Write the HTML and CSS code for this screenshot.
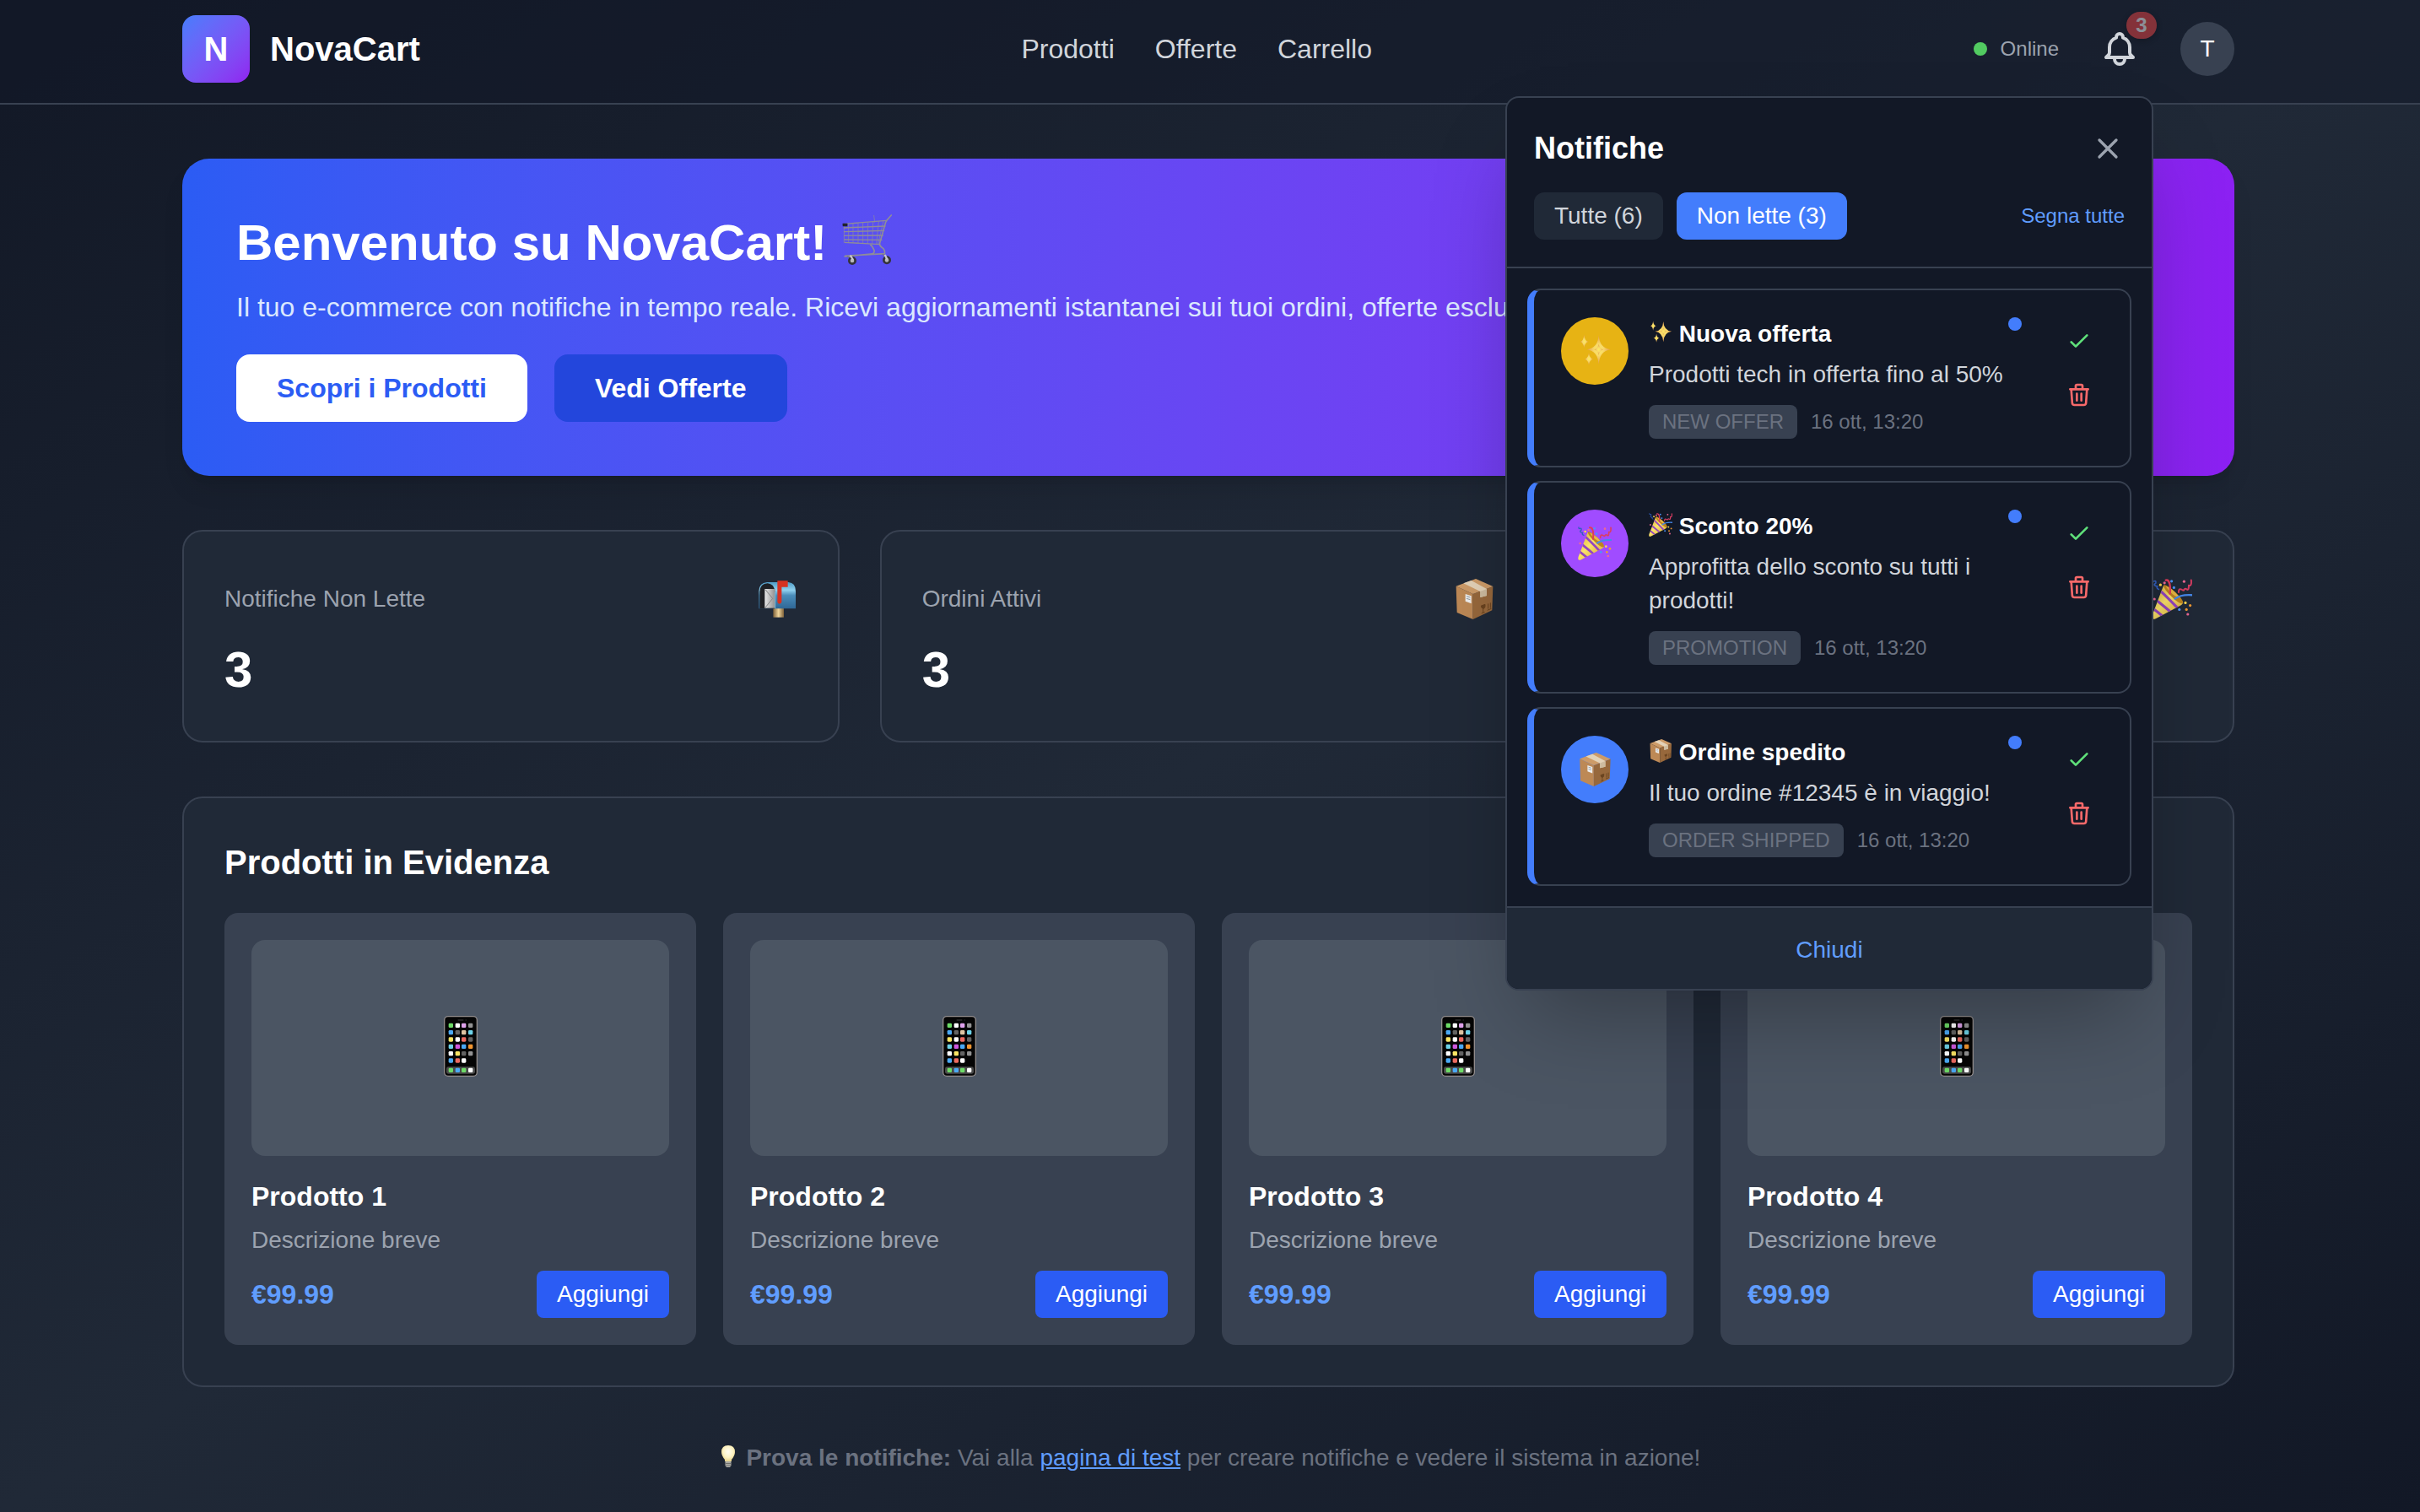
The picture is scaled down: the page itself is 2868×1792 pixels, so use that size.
FILE: index.html
```html
<!DOCTYPE html>
<html lang="it">
<head>
<meta charset="utf-8">
<meta name="viewport" content="width=device-width, initial-scale=1">
<title>NovaCart</title>
<link rel="stylesheet" href="styles.css">
</head>
<body>
<svg class="sprite" aria-hidden="true">
  <defs>
    <linearGradient id="gold" x1="0" y1="0" x2="1" y2="1"><stop offset="0" stop-color="#c99422"/><stop offset=".45" stop-color="#fbe36c"/><stop offset="1" stop-color="#c48a1e"/></linearGradient>
    <linearGradient id="mail" x1="0" y1="0" x2="0" y2="1"><stop offset="0" stop-color="#4f9cc6"/><stop offset=".3" stop-color="#8fd0ee"/><stop offset=".5" stop-color="#4a8dba"/><stop offset="1" stop-color="#2f6796"/></linearGradient>
    <linearGradient id="letter" x1="0" y1="0" x2="1" y2="0"><stop offset="0" stop-color="#e8e8e8"/><stop offset="1" stop-color="#8f8f8f"/></linearGradient>
    <linearGradient id="post" x1="0" y1="0" x2="1" y2="0"><stop offset="0" stop-color="#7d6039"/><stop offset=".5" stop-color="#f2d79c"/><stop offset="1" stop-color="#7d6039"/></linearGradient>
    <radialGradient id="star"><stop offset="0" stop-color="#fbec62"/><stop offset=".4" stop-color="#f8d868"/><stop offset="1" stop-color="#e39a52"/></radialGradient>
    <radialGradient id="glow" cx=".5" cy=".4" r=".6"><stop offset="0" stop-color="#fffef4"/><stop offset=".6" stop-color="#fdf3c4"/><stop offset="1" stop-color="#e6d28a"/></radialGradient>
    <clipPath id="cone"><path d="M2 118Q-1 112 4 102L35 20Q44 20 68 42Q92 62 93 72Q90 78 80 82L12 118Q5 121 2 118Z"/></clipPath>
  </defs>
  <symbol id="cart" viewBox="0 0 180 180">
    <g fill="none" stroke="#8f8d98" stroke-linecap="round">
      <path stroke-width="5" d="M178 3L163 20L158 28L136 106M104 109Q110 112 117 128Q120 140 104 141L12 150M137 108Q138 114 150 122Q156 130 154 140L14 148"/>
      <path stroke-width="4" d="M14 34L160 22M10 48L156 42M11 62L152 58M11 76L148 75M12 90L144 91M13 100L137 107"/>
      <path stroke-width="2" d="M10 40V100M26 35V100M42 34V101M60 32V102M77 31V103M95 30L94 104M113 28L110 105M133 26L125 106M116 4L119 28M150 24L131 104"/>
      <path stroke-width="4" stroke="#77757f" d="M22 150L36 158M148 142L160 156"/>
    </g>
    <rect x="5" y="32" width="17" height="11" rx="2" fill="#20222c"/>
    <g fill="#b9b8bc" stroke="#35343a" stroke-width="8"><circle cx="39" cy="165" r="11"/><circle cx="162" cy="163" r="11"/></g>
    <path d="M32 146L42 162M155 144L163 160" stroke="#c9c8ce" stroke-width="7"/>
  </symbol>
  <symbol id="mailbox" viewBox="0 0 144 144">
    <rect x="58" y="100" width="38" height="37" fill="url(#post)"/>
    <path d="M36 12H112Q138 14 138 44V106H7V44Q8 14 36 12Z" fill="url(#mail)"/>
    <path d="M10 106V46Q12 16 38 16Q62 18 64 46V106Z" fill="#1f2125"/>
    <rect x="28" y="36" width="37" height="68" fill="url(#letter)"/>
    <path d="M30 38L56 70L30 102" fill="none" stroke="#858585" stroke-width="3"/>
    <path d="M65 46V106" stroke="#7db9d8" stroke-width="3"/>
    <path d="M73 7H110V29H88V82Q87 89 80 89Q74 89 73 82Z" fill="#d63222"/>
  </symbol>
  <symbol id="package" viewBox="0 0 144 144">
    <path d="M8 26L68 54V144L11 120Z" fill="#bd8956"/>
    <path d="M68 54L139 27L136 112L68 144Z" fill="#97683c"/>
    <path d="M8 26L78 0L139 27L68 54Z" fill="#cd9b68"/>
    <path d="M34 16L62 6L117 36V60L94 66V45Z" fill="#e3d2b8"/>
    <path d="M94 45L117 36V60L94 66Z" fill="#cdbb9f"/>
    <path d="M41 54L62 61V88L41 80Z" fill="#eeeeee"/>
    <path d="M45 62L58 66M45 70L58 74" stroke="#8d99a3" stroke-width="3"/>
    <path d="M97 96L111 91Q112 105 105 106Q98 106 97 96ZM104 106V121M98 123L110 118M122 88V107M130 85V104M119 112L133 106" fill="#69431f" stroke="#69431f" stroke-width="3"/>
  </symbol>
  <symbol id="party" viewBox="0 0 120 120">
    <g clip-path="url(#cone)">
      <rect width="120" height="120" fill="url(#gold)"/>
      <path d="M24 34Q48 56 78 88M12 62Q30 76 56 98M4 88Q18 98 34 112" fill="none" stroke="#9345bf" stroke-width="8"/>
    </g>
    <path d="M35 19Q42 14 68 38Q95 62 93 72Q84 78 60 54Q36 32 35 19Z" fill="#bd8420"/>
    <path d="M42 22Q55 26 70 40L84 56Q70 54 58 42Q46 30 42 22Z" fill="#e7b844"/>
    <g fill="none" stroke-linecap="round" stroke-width="6">
      <path d="M42 4Q50 2 53 14Q56 28 54 44" stroke="#df3c5b"/>
      <path d="M69 59Q86 46 118 48" stroke="#4688ea"/>
      <path d="M80 40Q80 28 87 31T94 36Q98 26 104 31T110 20Q119 22 117 4" stroke="#d93e63" stroke-width="5"/>
      <path d="M3 3Q2 9 8 7T12 13Q5 17 10 20T18 21Q12 28 21 31" stroke="#315fc0" stroke-width="4"/>
    </g>
    <g fill="#ffd84f"><circle cx="26" cy="18" r="4"/><circle cx="100" cy="71" r="4"/></g>
    <g fill="#f09a32"><circle cx="114" cy="79" r="4"/><circle cx="103" cy="91" r="4"/></g>
    <g fill="#4d94fa"><circle cx="59" cy="7" r="4"/><circle cx="66" cy="26" r="4"/><circle cx="82" cy="91" r="4"/></g>
    <g fill="#ec6894"><circle cx="96" cy="8" r="4"/><circle cx="8" cy="60" r="4"/><circle cx="38" cy="12" r="4"/><circle cx="107" cy="105" r="4"/></g>
  </symbol>
  <symbol id="sparkles" viewBox="0 0 120 120">
    <g fill="url(#star)">
      <path d="M74 4Q77 50 116 55Q77 60 74 108Q71 60 32 55Q71 50 74 4Z"/>
      <path d="M74 36Q78 51 90 55Q78 59 74 74Q70 59 58 55Q70 51 74 36Z"/>
      <path d="M22 2Q24 24 38 27Q24 30 22 50Q20 30 8 27Q20 24 22 2Z"/>
      <path d="M39 66Q41 86 54 89Q41 92 39 110Q37 92 24 89Q37 86 39 66Z"/>
    </g>
  </symbol>
  <symbol id="phone" viewBox="0 0 216 216">
    <rect x="50" y="2" width="116" height="212" rx="13" fill="#050505" stroke="#918c8c" stroke-width="4"/>
    <path d="M98 15H118M125 15H128" stroke="#2d2d2d" stroke-width="5"/>
    <rect x="57" y="181" width="102" height="25" rx="7" fill="#4a4a4a"/>
    <g fill="#6ddb67"><rect x="65" y="26" width="16" height="16" rx="4"/><rect x="65" y="185" width="16" height="16" rx="4"/><rect x="111" y="185" width="16" height="16" rx="4"/></g>
    <g fill="#fff"><rect x="89" y="26" width="16" height="16" rx="4"/><rect x="89" y="76" width="16" height="16" rx="4"/><rect x="65" y="126" width="16" height="16" rx="4"/><rect x="111" y="151" width="16" height="16" rx="4"/><rect x="135" y="185" width="16" height="16" rx="4"/></g>
    <g fill="#4ba9f5"><rect x="65" y="51" width="16" height="16" rx="4"/><rect x="111" y="101" width="16" height="16" rx="4"/><rect x="65" y="151" width="16" height="16" rx="4"/><rect x="89" y="185" width="16" height="16" rx="4"/></g>
    <g fill="#636363"><rect x="89" y="51" width="16" height="16" rx="4"/><rect x="135" y="76" width="16" height="16" rx="4"/><rect x="111" y="126" width="16" height="16" rx="4"/></g>
    <g fill="#929292"><rect x="135" y="26" width="16" height="16" rx="4"/><rect x="135" y="126" width="16" height="16" rx="4"/></g>
    <g fill="#6dd3e8"><rect x="135" y="51" width="16" height="16" rx="4"/><rect x="65" y="101" width="16" height="16" rx="4"/></g>
    <g fill="#fae464"><rect x="65" y="76" width="16" height="16" rx="4"/><rect x="89" y="126" width="16" height="16" rx="4"/></g>
    <g fill="#ec6a60"><rect x="111" y="76" width="16" height="16" rx="4"/><rect x="89" y="151" width="16" height="16" rx="4"/></g>
    <rect x="111" y="26" width="16" height="16" rx="4" fill="#dfa2ec"/><rect x="111" y="51" width="16" height="16" rx="4" fill="#dec4a3"/><rect x="89" y="101" width="16" height="16" rx="4" fill="#cf58dd"/><rect x="135" y="101" width="16" height="16" rx="4" fill="#f1952f"/>
  </symbol>
  <symbol id="bulb" viewBox="0 0 28 28">
    <path d="M14 1Q22 1 22 9Q22 13 18 18V20H10V18Q6 13 6 9Q6 1 14 1Z" fill="url(#glow)"/>
    <path d="M10.500 20H17.500V25L16 27H12L10.500 25Z" fill="#a9a9a4"/>
    <path d="M10.500 22.500H17.500M11 25H17" stroke="#70706c"/>
  </symbol>
  <symbol id="check" viewBox="0 0 24 24"><path d="M5 13l4 4L19 7"/></symbol>
  <symbol id="trash" viewBox="0 0 24 24"><path d="M19 7l-.867 12.142A2 2 0 0116.138 21H7.862a2 2 0 01-1.995-1.858L5 7m5 4v6m4-6v6m1-10V4a1 1 0 00-1-1h-4a1 1 0 00-1 1v3M4 7h16"/></symbol>
</svg>

<header class="topbar">
  <div class="container topbar-row">
    <div class="brand"><span class="logo">N</span><span>NovaCart</span></div>
    <nav class="nav"><a href="#prodotti">Prodotti</a><a href="#offerte">Offerte</a><a href="#carrello">Carrello</a></nav>
    <div class="tools">
      <div class="status"><span class="status-dot"></span>Online</div>
      <div class="bell-wrap">
        <button class="bell" type="button" aria-label="Notifiche">
          <svg class="line-icon bell-icon" viewBox="0 0 24 24"><path d="M15 17h5l-1.405-1.405A2.032 2.032 0 0118 14.158V11a6.002 6.002 0 00-4-5.659V5a2 2 0 10-4 0v.341C7.670 6.165 6 8.388 6 11v3.159c0 .538-.214 1.055-.595 1.436L4 17h5m6 0v1a3 3 0 11-6 0v-1m6 0H9"/></svg>
          <span class="badge">3</span>
        </button>
        <section class="panel" aria-label="Notifiche">
          <div class="panel-head">
            <div class="panel-title">
              <h2>Notifiche</h2>
              <button class="close" type="button" aria-label="Chiudi pannello"><svg class="line-icon" viewBox="0 0 24 24"><path d="M6 18L18 6M6 6l12 12"/></svg></button>
            </div>
            <div class="tabs">
              <button class="tab" type="button">Tutte (6)</button>
              <button class="tab tab-active" type="button">Non lette (3)</button>
              <button class="mark-all" type="button">Segna tutte</button>
            </div>
          </div>
          <ul class="list">
            <li class="item">
              <span class="avatar avatar-offer"><svg><use href="#sparkles"/></svg></span>
              <div class="item-body">
                <div class="item-title"><h3><svg class="emoji"><use href="#sparkles"/></svg> Nuova offerta</h3><span class="unread"></span></div>
                <p class="message">Prodotti tech in offerta fino al 50%</p>
                <div class="meta"><span class="tag">NEW OFFER</span><time>16 ott, 13:20</time></div>
              </div>
              <div class="actions">
                <button class="action read" type="button" aria-label="Segna come letta"><svg class="line-icon"><use href="#check"/></svg></button>
                <button class="action delete" type="button" aria-label="Elimina"><svg class="line-icon"><use href="#trash"/></svg></button>
              </div>
            </li>
            <li class="item">
              <span class="avatar avatar-promo"><svg><use href="#party"/></svg></span>
              <div class="item-body">
                <div class="item-title"><h3><svg class="emoji"><use href="#party"/></svg> Sconto 20%</h3><span class="unread"></span></div>
                <p class="message">Approfitta dello sconto su tutti i prodotti!</p>
                <div class="meta"><span class="tag">PROMOTION</span><time>16 ott, 13:20</time></div>
              </div>
              <div class="actions">
                <button class="action read" type="button" aria-label="Segna come letta"><svg class="line-icon"><use href="#check"/></svg></button>
                <button class="action delete" type="button" aria-label="Elimina"><svg class="line-icon"><use href="#trash"/></svg></button>
              </div>
            </li>
            <li class="item">
              <span class="avatar avatar-order"><svg><use href="#package"/></svg></span>
              <div class="item-body">
                <div class="item-title"><h3><svg class="emoji"><use href="#package"/></svg> Ordine spedito</h3><span class="unread"></span></div>
                <p class="message">Il tuo ordine #12345 è in viaggio!</p>
                <div class="meta"><span class="tag">ORDER SHIPPED</span><time>16 ott, 13:20</time></div>
              </div>
              <div class="actions">
                <button class="action read" type="button" aria-label="Segna come letta"><svg class="line-icon"><use href="#check"/></svg></button>
                <button class="action delete" type="button" aria-label="Elimina"><svg class="line-icon"><use href="#trash"/></svg></button>
              </div>
            </li>
          </ul>
          <div class="panel-foot"><button class="dismiss" type="button">Chiudi</button></div>
        </section>
      </div>
      <button class="user" type="button" aria-label="Profilo">T</button>
    </div>
  </div>
</header>

<main class="container main">
  <section class="hero">
    <h1>Benvenuto su NovaCart! <svg class="emoji"><use href="#cart"/></svg></h1>
    <p>Il tuo e-commerce con notifiche in tempo reale. Ricevi aggiornamenti istantanei sui tuoi ordini, offerte esclusive e molto altro!</p>
    <div class="hero-actions">
      <button class="cta cta-light" type="button">Scopri i Prodotti</button>
      <button class="cta cta-dark" type="button">Vedi Offerte</button>
    </div>
  </section>

  <section class="stats">
    <div class="stat"><div class="stat-head"><span>Notifiche Non Lette</span><svg><use href="#mailbox"/></svg></div><strong>3</strong></div>
    <div class="stat"><div class="stat-head"><span>Ordini Attivi</span><svg><use href="#package"/></svg></div><strong>3</strong></div>
    <div class="stat"><div class="stat-head"><span>Offerte</span><svg><use href="#party"/></svg></div><strong>5</strong></div>
  </section>

  <section class="featured" id="prodotti">
    <h2>Prodotti in Evidenza</h2>
    <div class="products">
      <article class="product"><div class="thumb"><svg><use href="#phone"/></svg></div><h3>Prodotto 1</h3><p>Descrizione breve</p><div class="buy"><span class="price">€99.99</span><button class="add" type="button">Aggiungi</button></div></article>
      <article class="product"><div class="thumb"><svg><use href="#phone"/></svg></div><h3>Prodotto 2</h3><p>Descrizione breve</p><div class="buy"><span class="price">€99.99</span><button class="add" type="button">Aggiungi</button></div></article>
      <article class="product"><div class="thumb"><svg><use href="#phone"/></svg></div><h3>Prodotto 3</h3><p>Descrizione breve</p><div class="buy"><span class="price">€99.99</span><button class="add" type="button">Aggiungi</button></div></article>
      <article class="product"><div class="thumb"><svg><use href="#phone"/></svg></div><h3>Prodotto 4</h3><p>Descrizione breve</p><div class="buy"><span class="price">€99.99</span><button class="add" type="button">Aggiungi</button></div></article>
    </div>
  </section>

  <p class="hint"><svg class="emoji"><use href="#bulb"/></svg> <strong>Prova le notifiche:</strong> Vai alla <a href="#test">pagina di test</a> per creare notifiche e vedere il sistema in azione!</p>
</main>
</body>
</html>
```

FILE: styles.css
```css
:root {
  --gray-900: #121826;
  --gray-800: #202937;
  --gray-700: #384151;
  --gray-600: #4b5563;
  --gray-500: #6b7280;
  --gray-400: #9ca3af;
  --gray-300: #d1d5db;
  --blue-400: #609dff;
  --blue-500: #437dfc;
  --blue-600: #2b5cf4;
}

*, *::before, *::after { box-sizing: border-box; }

body {
  margin: 0;
  min-height: 100vh;
  font-family: "Liberation Sans", Arial, sans-serif;
  font-size: 28px;
  line-height: 40px;
  color: #fff;
  background: linear-gradient(to bottom right in oklab, var(--gray-900), var(--gray-800), var(--gray-900));
}

h1, h2, h3, p, ul { margin: 0; padding: 0; }
button { margin: 0; padding: 0; border: 0; background: none; font: inherit; color: inherit; cursor: pointer; }
svg { display: block; flex: none; }

.sprite { position: absolute; width: 0; height: 0; }
.emoji { display: inline-block; width: 1em; height: 1em; vertical-align: -0.1em; }
.line-icon { fill: none; stroke: currentColor; stroke-width: 2; stroke-linecap: round; stroke-linejoin: round; }

.container { max-width: 2564px; margin: 0 auto; padding: 0 68px 0 64px; }

/* Top bar */
.topbar { position: relative; z-index: 10; padding: 18px 0 24px; border-bottom: 2px solid var(--gray-700); background: rgba(17, 24, 39, 0.5); }
.topbar-row { display: flex; align-items: center; justify-content: space-between; }
.brand { display: flex; align-items: center; gap: 24px; font-size: 40px; font-weight: 700; line-height: 56px; }
.logo { display: grid; place-items: center; width: 80px; height: 80px; border-radius: 16px; background: linear-gradient(to bottom right in oklab, var(--blue-500), #9020f0); }
.nav { display: flex; gap: 48px; font-size: 32px; line-height: 48px; }
.nav a { color: var(--gray-300); text-decoration: none; }
.tools { display: flex; align-items: center; gap: 32px; }
.status { display: flex; align-items: center; gap: 16px; font-size: 24px; line-height: 32px; color: var(--gray-400); }
.status-dot { width: 16px; height: 16px; border-radius: 50%; background: #52cb61; }
.bell-wrap { position: relative; }
.bell { display: block; position: relative; padding: 16px; color: var(--gray-300); }
.bell-icon { width: 48px; height: 48px; }
.badge { position: absolute; top: -4px; right: -4px; min-width: 36px; padding: 0 8px; border-radius: 16px; background: #f04545; box-shadow: 0 2px 6px rgba(0, 0, 0, 0.4); opacity: 0.5; font-size: 24px; font-weight: 700; line-height: 32px; color: #fff; text-align: center; }
.user { width: 64px; height: 64px; border-radius: 50%; background: var(--gray-700); }

/* Notification panel */
.panel { position: absolute; top: 96px; right: 0; width: 768px; overflow: hidden; border: 2px solid var(--gray-700); border-radius: 16px; background: var(--gray-900); box-shadow: 0 50px 100px -24px rgba(0, 0, 0, 0.3); }
.panel-head { padding: 32px; border-bottom: 2px solid var(--gray-700); }
.panel-title { display: flex; align-items: center; justify-content: space-between; margin-bottom: 24px; }
.panel-title h2 { font-size: 36px; line-height: 56px; }
.close { color: var(--gray-400); }
.close svg { width: 40px; height: 40px; }
.tabs { display: flex; align-items: center; gap: 16px; }
.tab { padding: 8px 24px; border-radius: 12px; background: var(--gray-800); color: var(--gray-300); }
.tab-active { background: var(--blue-500); color: #fff; }
.mark-all { margin-left: auto; font-size: 24px; line-height: 32px; color: var(--blue-400); }
.list { display: flex; flex-direction: column; gap: 16px; padding: 24px; list-style: none; }
.item { display: flex; align-items: flex-start; gap: 24px; padding: 32px; border: 2px solid var(--gray-700); border-left: 8px solid var(--blue-500); border-radius: 16px; }
.avatar { display: grid; place-items: center; flex: none; width: 80px; height: 80px; border-radius: 50%; }
.avatar svg { width: 40px; height: 40px; }
.avatar-offer { background: #e7b314; }
.avatar-promo { background: #a04cff; }
.avatar-order { background: var(--blue-500); }
.item-body { flex: 1; min-width: 0; }
.item-title { display: flex; align-items: flex-start; justify-content: space-between; margin-bottom: 8px; }
.item-title h3 { font-size: 28px; line-height: 40px; }
.unread { width: 16px; height: 16px; border-radius: 50%; background: var(--blue-500); }
.message { color: var(--gray-300); }
.meta { display: flex; align-items: center; gap: 16px; margin-top: 16px; font-size: 24px; line-height: 32px; color: var(--gray-500); }
.tag { padding: 4px 16px; border-radius: 8px; background: var(--gray-700); }
.actions { display: flex; flex-direction: column; gap: 8px; margin-left: 16px; }
.action { padding: 12px; }
.action svg { width: 32px; height: 32px; }
.read { color: #5fe07a; }
.delete { color: #f8696a; }
.panel-foot { padding: 26px 32px 22px; border-top: 2px solid var(--gray-700); background: var(--gray-800); }
.dismiss { display: block; width: 100%; line-height: 48px; color: var(--blue-400); }

/* Page content */
.main { display: flex; flex-direction: column; gap: 64px; padding-top: 64px; padding-bottom: 44px; }
.hero { padding: 64px; border-radius: 32px; background: linear-gradient(to right in oklab, var(--blue-600), #8c20f2); box-shadow: 0 20px 30px -6px rgba(0, 0, 0, 0.1), 0 8px 12px -8px rgba(0, 0, 0, 0.1); }
.hero h1 { margin-bottom: 16px; font-size: 60px; line-height: 72px; }
.hero p { margin-bottom: 32px; font-size: 32px; line-height: 48px; color: #dbe8fe; }
.hero-actions { display: flex; gap: 32px; }
.cta { padding: 16px 48px; border-radius: 16px; font-size: 32px; font-weight: 700; line-height: 48px; }
.cta-light { background: #fff; color: var(--blue-600); }
.cta-dark { background: #2346dc; color: #fff; }

.stats { display: grid; grid-template-columns: repeat(3, 1fr); gap: 48px; }
.stat { padding: 48px; border: 2px solid var(--gray-700); border-radius: 24px; background: var(--gray-800); }
.stat-head { display: flex; align-items: center; justify-content: space-between; height: 64px; margin-bottom: 16px; color: var(--gray-400); }
.stat-head svg { width: 48px; height: 48px; }
.stat strong { display: block; font-size: 60px; line-height: 72px; }

.featured { padding: 48px; border: 2px solid var(--gray-700); border-radius: 24px; background: var(--gray-800); }
.featured h2 { margin-bottom: 32px; font-size: 40px; line-height: 56px; }
.products { display: grid; grid-template-columns: repeat(4, 1fr); gap: 32px; }
.product { padding: 32px; border-radius: 16px; background: var(--gray-700); }
.thumb { display: grid; place-items: center; height: 256px; margin-bottom: 24px; padding-bottom: 4px; border-radius: 16px; background: var(--gray-600); }
.thumb svg { width: 72px; height: 72px; }
.product h3 { margin-bottom: 8px; font-size: 32px; line-height: 48px; }
.product p { margin-bottom: 16px; color: var(--gray-400); }
.buy { display: flex; align-items: center; justify-content: space-between; }
.price { font-size: 32px; font-weight: 700; color: var(--blue-400); }
.add { padding: 8px 24px; border-radius: 8px; background: var(--blue-600); }

.hint { text-align: center; color: var(--gray-500); }
.hint a { color: var(--blue-400); }
```
